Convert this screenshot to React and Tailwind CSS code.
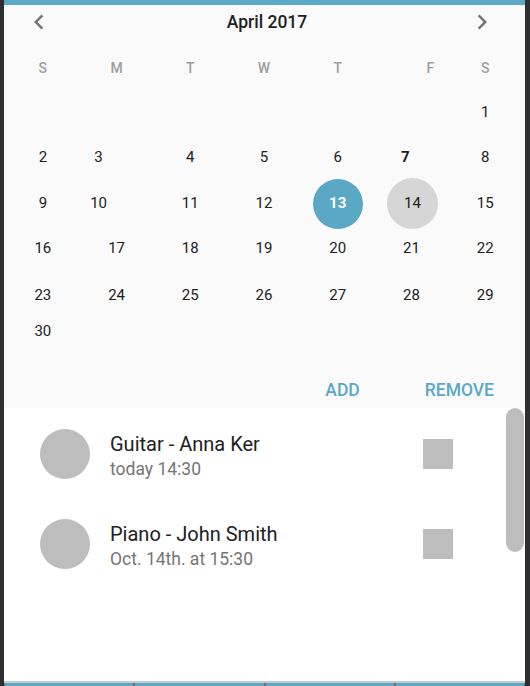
const BLUE = "bg-[#5ba8c6]";

const weekDays = [
  { label: "S", cls: "" },
  { label: "M", cls: "" },
  { label: "T", cls: "" },
  { label: "W", cls: "" },
  { label: "T", cls: "" },
  { label: "F", cls: "ml-[38px]" },
  { label: "S", cls: "" },
];

// each week: [label, extra classes]; null = empty cell
const weeks = [
  { mt: "mt-[8px]", days: [null, null, null, null, null, null, ["1", ""]] },
  {
    mt: "mt-[9px]",
    days: [["2", ""], ["3", "mr-[36px]"], ["4", ""], ["5", ""], ["6", ""], ["7", "font-bold mr-[12px]"], ["8", ""]],
  },
  {
    mt: "mt-[3px]",
    tall: true,
    days: [["9", ""], ["10", "mr-[36px]"], ["11", ""], ["12", ""], ["13", "selected"], ["14", "today"], ["15", ""]],
  },
  {
    mt: "mt-[2px]",
    days: [["16", ""], ["17", ""], ["18", ""], ["19", ""], ["20", ""], ["21", ""], ["22", ""]],
  },
  {
    mt: "mt-[11px]",
    days: [["23", ""], ["24", ""], ["25", ""], ["26", ""], ["27", ""], ["28", ""], ["29", ""]],
  },
  { mt: "mt-0", days: [["30", ""], null, null, null, null, null, null] },
];

const lessons = [
  { title: "Guitar - Anna Ker", when: "today 14:30" },
  { title: "Piano - John Smith", when: "Oct. 14th. at 15:30" },
];

function ChevronLeft() {
  return (
    <svg width="30" height="30" viewBox="0 0 24 24" fill="#757575">
      <path d="M15.41 7.41L14 6l-6 6 6 6 1.41-1.41L10.83 12z" />
    </svg>
  );
}

function ChevronRight() {
  return (
    <svg width="30" height="30" viewBox="0 0 24 24" fill="#757575">
      <path d="M10 6L8.59 7.41 13.17 12l-4.58 4.59L10 18l6-6z" />
    </svg>
  );
}

function DayCell({ day }) {
  if (!day) return <div />;
  const [label, cls] = day;
  if (cls === "selected") {
    return (
      <div className="flex items-center justify-center">
        <div className={`flex h-[50px] w-[50px] items-center justify-center rounded-full ${BLUE} text-[15px] font-bold text-white`}>
          {label}
        </div>
      </div>
    );
  }
  if (cls === "today") {
    return (
      <div className="flex items-center justify-center">
        <div className="ml-[2px] flex h-[51px] w-[51px] items-center justify-center rounded-full bg-[#d6d6d6] text-[15px] text-[#212121]">
          {label}
        </div>
      </div>
    );
  }
  return (
    <div className="flex items-center justify-center">
      <span className={`text-[15px] text-[#212121] ${cls}`}>{label}</span>
    </div>
  );
}

export default function App() {
  return (
    <div className="flex h-[686px] w-[530px] bg-[#2e2f31] pl-[4px] pr-[5px] font-['Roboto',sans-serif]">
      <div className="flex flex-1 flex-col">
        <div className={`h-[5px] ${BLUE}`} />

        {/* calendar */}
        <div className="flex h-[403px] flex-col bg-[#fafafa]">
          <div className="flex h-[34px] items-center">
            <div className="ml-[20px]">
              <ChevronLeft />
            </div>
            <div className="flex-1 pl-[13px] text-center text-[17.5px] font-medium text-[#212121]">April 2017</div>
            <div className="mr-[28px]">
              <ChevronRight />
            </div>
          </div>

          <div className="mt-[11px] ml-[2px] grid h-[36px] w-[516px] grid-cols-7">
            {weekDays.map((d, i) => (
              <div key={i} className="flex items-center justify-center">
                <span className={`text-[14px] font-medium text-[#9e9e9e] ${d.cls}`}>{d.label}</span>
              </div>
            ))}
          </div>

          {weeks.map((w, i) => (
            <div
              key={i}
              className={`${w.mt} ml-[2px] grid w-[516px] grid-cols-7 ${w.tall ? "h-[50px]" : "h-[36px]"}`}
            >
              {w.days.map((d, j) => (
                <DayCell key={j} day={d} />
              ))}
            </div>
          ))}

          <div className="mt-[23px] flex h-[36px] items-center justify-end gap-[65px] pr-[31px] text-[17.5px] font-medium text-[#5ba8c6]">
            <button>ADD</button>
            <button>REMOVE</button>
          </div>
        </div>

        {/* lessons */}
        <div className="relative flex-1 bg-white pt-[1px]">
          {lessons.map((l) => (
            <div key={l.title} className="flex h-[90px] items-center pl-[36px]">
              <div className="h-[50px] w-[50px] rounded-full bg-[#bdbdbd]" />
              <div className="mt-[3px] ml-[20px] flex flex-col">
                <span className="text-[20px] leading-[26px] text-[#212121]">{l.title}</span>
                <span className="text-[17.5px] leading-[24px] text-[#757575]">{l.when}</span>
              </div>
              <div className="mr-[72px] ml-auto h-[30px] w-[30px] bg-[#bdbdbd]" />
            </div>
          ))}
          <div className="absolute top-0 right-[1px] h-[144px] w-[18px] rounded-full bg-[#bdbdbd]" />
        </div>

        <div className="h-[2px] bg-[#c9c9c9]" />
        <div className="flex h-[3px] gap-[2px] bg-[#6e6e6e] px-[1px]">
          <div className={`flex-1 ${BLUE}`} />
          <div className={`flex-1 ${BLUE}`} />
          <div className={`flex-1 ${BLUE}`} />
          <div className={`flex-1 ${BLUE}`} />
        </div>
      </div>
    </div>
  );
}
